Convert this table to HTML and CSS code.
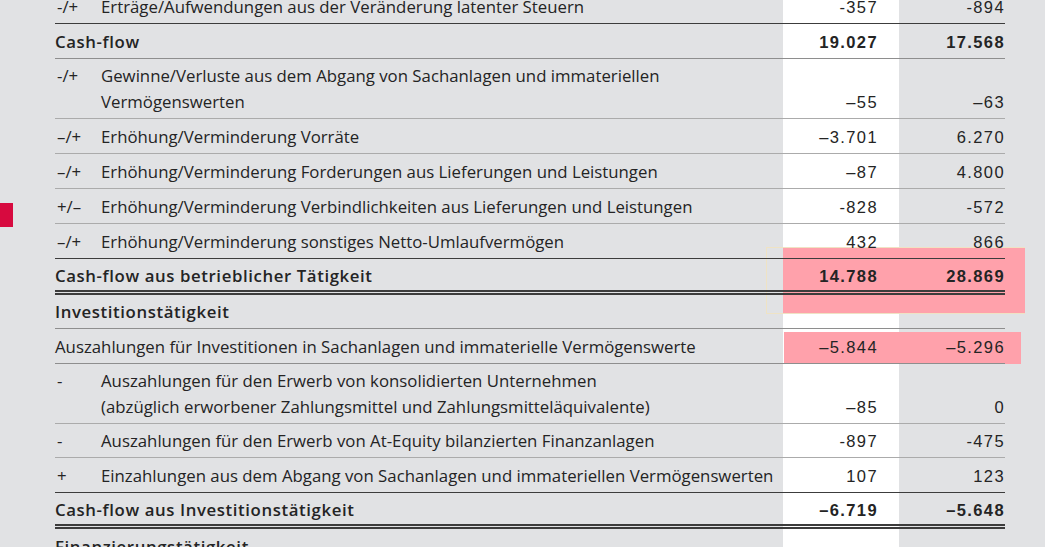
FILE: index.html
```html
<!DOCTYPE html>
<html lang="de">
<head>
<meta charset="utf-8">
<title>Kapitalflussrechnung</title>
<link rel="stylesheet" href="styles.css">
</head>
<body>
<div class="page">
  <div class="marker"></div>
  <div class="hl hl-frame"></div>
  <div class="hl hl-1"></div>
  <div class="hl hl-2"></div>
  <table class="cf">
    <colgroup>
      <col class="c-sign"><col class="c-label"><col class="c-v1"><col class="c-v2">
    </colgroup>
    <tbody>
      <tr class="r line-dark">
        <td class="sign">-/+</td><td class="label">Erträge/Aufwendungen aus der Veränderung latenter Steuern</td>
        <td class="num n1">-357</td><td class="num n2">-894</td>
      </tr>
      <tr class="r line-mid bold">
        <td class="label" colspan="2">Cash-flow</td>
        <td class="num n1">19.027</td><td class="num n2">17.568</td>
      </tr>
      <tr class="r line-light two">
        <td class="sign">-/+</td><td class="label">Gewinne/Verluste aus dem Abgang von Sachanlagen und immateriellen<br>Vermögenswerten</td>
        <td class="num n1">–55</td><td class="num n2">–63</td>
      </tr>
      <tr class="r line-light">
        <td class="sign">–/+</td><td class="label">Erhöhung/Verminderung Vorräte</td>
        <td class="num n1">–3.701</td><td class="num n2">6.270</td>
      </tr>
      <tr class="r line-light">
        <td class="sign">–/+</td><td class="label">Erhöhung/Verminderung Forderungen aus Lieferungen und Leistungen</td>
        <td class="num n1">–87</td><td class="num n2">4.800</td>
      </tr>
      <tr class="r line-light">
        <td class="sign">+/–</td><td class="label">Erhöhung/Verminderung Verbindlichkeiten aus Lieferungen und Leistungen</td>
        <td class="num n1">-828</td><td class="num n2">-572</td>
      </tr>
      <tr class="r line-dark">
        <td class="sign">–/+</td><td class="label">Erhöhung/Verminderung sonstiges Netto-Umlaufvermögen</td>
        <td class="num n1">432</td><td class="num n2">866</td>
      </tr>
      <tr class="r line-double bold">
        <td class="label" colspan="2">Cash-flow aus betrieblicher Tätigkeit</td>
        <td class="num n1">14.788</td><td class="num n2">28.869</td>
      </tr>
      <tr class="r line-mid bold short">
        <td class="label" colspan="2">Investitionstätigkeit</td>
        <td class="num n1"></td><td class="num n2"></td>
      </tr>
      <tr class="r line-mid">
        <td class="label" colspan="2">Auszahlungen für Investitionen in Sachanlagen und immaterielle Vermögenswerte</td>
        <td class="num n1">–5.844</td><td class="num n2">–5.296</td>
      </tr>
      <tr class="r line-light two">
        <td class="sign">-</td><td class="label">Auszahlungen für den Erwerb von konsolidierten Unternehmen<br>(abzüglich erworbener Zahlungsmittel und Zahlungsmitteläquivalente)</td>
        <td class="num n1">–85</td><td class="num n2">0</td>
      </tr>
      <tr class="r line-light short">
        <td class="sign">-</td><td class="label">Auszahlungen für den Erwerb von At-Equity bilanzierten Finanzanlagen</td>
        <td class="num n1">-897</td><td class="num n2">-475</td>
      </tr>
      <tr class="r line-dark">
        <td class="sign">+</td><td class="label">Einzahlungen aus dem Abgang von Sachanlagen und immateriellen Vermögenswerten</td>
        <td class="num n1">107</td><td class="num n2">123</td>
      </tr>
      <tr class="r line-double bold">
        <td class="label" colspan="2">Cash-flow aus Investitionstätigkeit</td>
        <td class="num n1">–6.719</td><td class="num n2">–5.648</td>
      </tr>
      <tr class="r bold">
        <td class="label" colspan="2">Finanzierungstätigkeit</td>
        <td class="num n1"></td><td class="num n2"></td>
      </tr>
    </tbody>
  </table>
</div>
</body>
</html>
```
FILE: styles.css
```css
html, body {
  margin: 0;
  padding: 0;
  overflow: hidden;
}
body {
  background: #e1e2e4;
  color: #242424;
  font-family: "Open Sans", "Liberation Sans", sans-serif;
}
.page {
  position: relative;
  height: 547px;
  overflow: hidden;
  background: linear-gradient(to right, #e1e2e4 783px, #ffffff 783px, #ffffff 899px, #e1e2e4 899px);
}
.marker {
  position: absolute;
  left: 0;
  top: 203px;
  width: 13px;
  height: 24px;
  background: #d70a3f;
}
.hl {
  position: absolute;
  z-index: 0;
}
.hl-frame {
  left: 766px;
  top: 247px;
  width: 257px;
  height: 65px;
  border: 1px solid #efe3c4;
}
.hl-1 {
  left: 783px;
  top: 248px;
  width: 242px;
  height: 65px;
  background: #ffa1ab;
}
.hl-2 {
  left: 784px;
  top: 332px;
  width: 237px;
  height: 32px;
  background: #ffa1ab;
}
.cf {
  position: relative;
  z-index: 1;
  margin: -11px 0 0 55px;
  border-collapse: collapse;
  table-layout: fixed;
  width: 950px;
}
.c-sign { width: 46px; }
.c-label { width: 682px; }
.c-v1 { width: 116px; }
.c-v2 { width: 106px; }
.cf td {
  padding: 5px 0 3px 0;
  line-height: 26px;
  font-size: 16.8px;
  vertical-align: bottom;
  white-space: nowrap;
}
.cf .short td {
  padding-top: 4px;
  padding-bottom: 3px;
}
.cf .two td {
  padding-top: 4px;
  padding-bottom: 3px;
}
.cf td.sign {
  padding-left: 2px;
  vertical-align: top;
}
.cf td.num {
  text-align: right;
  font-family: "Liberation Sans", "Open Sans", sans-serif;
  font-size: 16.5px;
  letter-spacing: 1.4px;
}
.cf td.n1 { padding-right: 21px; }
.cf td.n2 { padding-right: 0; }
.cf .bold td {
  font-weight: 600;
  letter-spacing: 0.6px;
}
.cf .bold td.num {
  font-weight: bold;
  letter-spacing: 1.4px;
}
.cf .line-double td {
  padding-top: 4px;
  padding-bottom: 1px;
}
.line-dark td { border-bottom: 1px solid #3c3c3c; }
.line-mid td { border-bottom: 1px solid #8e8e8e; }
.line-light td { border-bottom: 1px solid #ababab; }
.line-double td { border-bottom: 5px double #3c3c3c; }
```
